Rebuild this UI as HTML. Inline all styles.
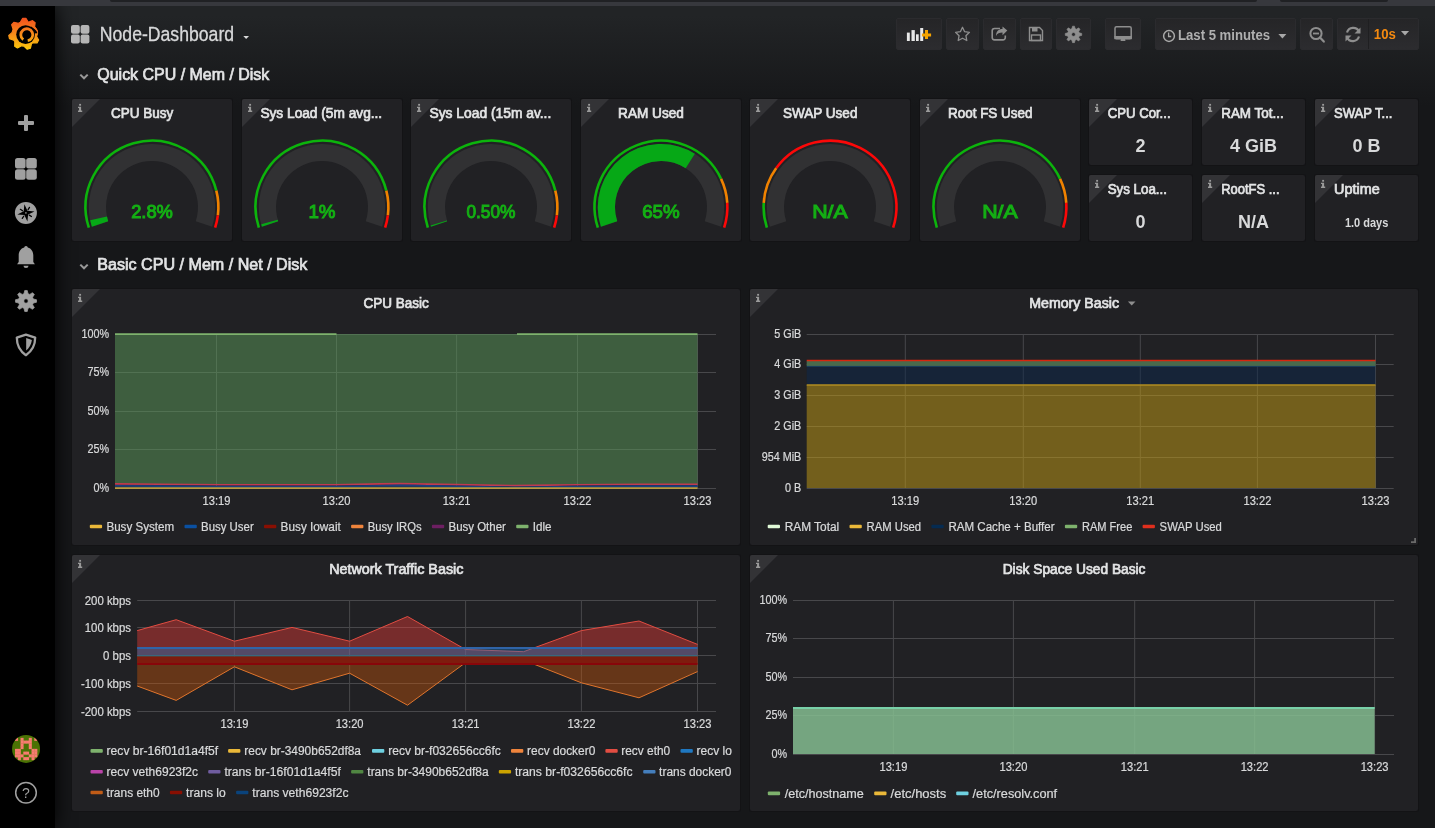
<!DOCTYPE html>
<html><head><meta charset="utf-8"><style>
html,body{margin:0;padding:0}
body{width:1435px;height:828px;overflow:hidden;position:relative;background:#161719;font-family:"Liberation Sans",sans-serif}
.bg{position:absolute;left:0;top:6px;width:1435px;height:822px;background:linear-gradient(180deg,#222426 10px,#161719 100px)}
.top{position:absolute;left:0;top:0;width:1435px;height:6px;background:#37383d}
.tab{position:absolute;top:0;height:2px;background:#202124;border-radius:0 0 5px 5px}
.side{position:absolute;left:0;top:6px;width:55px;height:822px;background:#000;box-shadow:0 0 20px #000}
.panel{position:absolute;background:#212124;border-radius:2px;box-sizing:border-box;overflow:hidden;box-shadow:0 0 0 1px #131315}
.corner{position:absolute;left:0;top:0;width:0;height:0;border-top:28px solid #333336;border-right:28px solid transparent}
.btn{position:absolute;box-sizing:border-box;background:linear-gradient(180deg,#252527,#2c2c2f);border:1px solid #2b2b2e;border-radius:2px}
svg{position:absolute;left:0;top:0;will-change:transform}
</style></head><body>
<div class="bg"></div>
<div class="side"></div>
<div class="top"></div><div class="tab" style="left:110px;width:1147px"></div><div class="tab" style="left:1280px;width:108px"></div>
<div class="panel" style="left:72px;top:99px;width:160px;height:142px"><div class="corner"></div></div><div class="panel" style="left:242px;top:99px;width:160px;height:142px"><div class="corner"></div></div><div class="panel" style="left:411px;top:99px;width:160px;height:142px"><div class="corner"></div></div><div class="panel" style="left:581px;top:99px;width:160px;height:142px"><div class="corner"></div></div><div class="panel" style="left:750px;top:99px;width:160px;height:142px"><div class="corner"></div></div><div class="panel" style="left:920px;top:99px;width:160px;height:142px"><div class="corner"></div></div><div class="panel" style="left:1089px;top:99px;width:103px;height:66px"><div class="corner"></div></div><div class="panel" style="left:1202px;top:99px;width:103px;height:66px"><div class="corner"></div></div><div class="panel" style="left:1315px;top:99px;width:103px;height:66px"><div class="corner"></div></div><div class="panel" style="left:1089px;top:175px;width:103px;height:66px"><div class="corner"></div></div><div class="panel" style="left:1202px;top:175px;width:103px;height:66px"><div class="corner"></div></div><div class="panel" style="left:1315px;top:175px;width:103px;height:66px"><div class="corner"></div></div><div class="panel" style="left:72px;top:289px;width:668px;height:256px"><div class="corner"></div></div><div class="panel" style="left:750px;top:289px;width:668px;height:256px"><div class="corner"></div></div><div class="panel" style="left:72px;top:555px;width:668px;height:256px"><div class="corner"></div></div><div class="panel" style="left:750px;top:555px;width:668px;height:256px"><div class="corner"></div></div><div class="btn" style="left:896px;top:18px;width:46px;height:32px"></div><div class="btn" style="left:946px;top:18px;width:33px;height:32px"></div><div class="btn" style="left:983px;top:18px;width:33px;height:32px"></div><div class="btn" style="left:1020px;top:18px;width:32px;height:32px"></div><div class="btn" style="left:1056px;top:18px;width:35px;height:32px"></div><div class="btn" style="left:1105px;top:18px;width:36px;height:32px"></div><div class="btn" style="left:1155px;top:18px;width:141px;height:32px"></div><div class="btn" style="left:1300px;top:18px;width:33px;height:32px"></div><div class="btn" style="left:1337px;top:18px;width:82px;height:32px"></div>
<svg width="1435" height="828" viewBox="0 0 1435 828" font-family="Liberation Sans, sans-serif">
<g fill="#9a9a9a"><rect x="79.15" y="103.9" width="1.9" height="1.8"/><path d="M78,106.7 h3.1 v3.9 h1.1 v1.4 h-4.2 v-1.4 h1.05 v-2.5 h-1.05 z"/></g>
<text x="111.1" y="117.8" font-size="14" fill="#e3e4e5" textLength="62.1" lengthAdjust="spacingAndGlyphs" stroke="#e3e4e5" stroke-width="0.7">CPU Busy</text>
<path d="M100.07,223.97 A54.60,54.60 0 1 1 203.93,223.97" stroke="#313133" stroke-width="17.2" fill="none"/>
<path d="M100.07,223.97 A54.60,54.60 0 0 1 98.58,218.41" stroke="#06a816" stroke-width="17.2" fill="none"/>
<path d="M88.85,227.62 A66.40,66.40 0 1 1 216.31,190.59" stroke="#0cb40c" stroke-width="2.6" fill="none"/>
<path d="M216.31,190.59 A66.40,66.40 0 0 1 217.88,215.42" stroke="#f08200" stroke-width="2.6" fill="none"/>
<path d="M217.88,215.42 A66.40,66.40 0 0 1 215.15,227.62" stroke="#fc0808" stroke-width="2.6" fill="none"/>
<text x="131.2" y="217.6" font-size="18.3" fill="#14b014" textLength="41.7" lengthAdjust="spacingAndGlyphs" stroke="#14b014" stroke-width="1.0">2.8%</text>
<g fill="#9a9a9a"><rect x="249.15" y="103.9" width="1.9" height="1.8"/><path d="M248,106.7 h3.1 v3.9 h1.1 v1.4 h-4.2 v-1.4 h1.05 v-2.5 h-1.05 z"/></g>
<text x="260.4" y="117.8" font-size="14" fill="#e3e4e5" textLength="121.8" lengthAdjust="spacingAndGlyphs" stroke="#e3e4e5" stroke-width="0.7">Sys Load (5m avg...</text>
<path d="M270.07,223.97 A54.60,54.60 0 1 1 373.93,223.97" stroke="#313133" stroke-width="17.2" fill="none"/>
<path d="M270.07,223.97 A54.60,54.60 0 0 1 269.47,222.00" stroke="#06a816" stroke-width="17.2" fill="none"/>
<path d="M258.85,227.62 A66.40,66.40 0 1 1 386.31,190.59" stroke="#0cb40c" stroke-width="2.6" fill="none"/>
<path d="M386.31,190.59 A66.40,66.40 0 0 1 387.88,215.42" stroke="#f08200" stroke-width="2.6" fill="none"/>
<path d="M387.88,215.42 A66.40,66.40 0 0 1 385.15,227.62" stroke="#fc0808" stroke-width="2.6" fill="none"/>
<text x="308.4" y="217.6" font-size="18.3" fill="#14b014" textLength="27.1" lengthAdjust="spacingAndGlyphs" stroke="#14b014" stroke-width="1.0">1%</text>
<g fill="#9a9a9a"><rect x="418.15" y="103.9" width="1.9" height="1.8"/><path d="M417,106.7 h3.1 v3.9 h1.1 v1.4 h-4.2 v-1.4 h1.05 v-2.5 h-1.05 z"/></g>
<text x="429.5" y="117.8" font-size="14" fill="#e3e4e5" textLength="121.8" lengthAdjust="spacingAndGlyphs" stroke="#e3e4e5" stroke-width="0.7">Sys Load (15m av...</text>
<path d="M439.07,223.97 A54.60,54.60 0 1 1 542.93,223.97" stroke="#313133" stroke-width="17.2" fill="none"/>
<path d="M439.07,223.97 A54.60,54.60 0 0 1 438.76,222.99" stroke="#06a816" stroke-width="17.2" fill="none"/>
<path d="M427.85,227.62 A66.40,66.40 0 1 1 555.31,190.59" stroke="#0cb40c" stroke-width="2.6" fill="none"/>
<path d="M555.31,190.59 A66.40,66.40 0 0 1 556.88,215.42" stroke="#f08200" stroke-width="2.6" fill="none"/>
<path d="M556.88,215.42 A66.40,66.40 0 0 1 554.15,227.62" stroke="#fc0808" stroke-width="2.6" fill="none"/>
<text x="466.4" y="217.6" font-size="18.3" fill="#14b014" textLength="49.1" lengthAdjust="spacingAndGlyphs" stroke="#14b014" stroke-width="1.0">0.50%</text>
<g fill="#9a9a9a"><rect x="588.15" y="103.9" width="1.9" height="1.8"/><path d="M587,106.7 h3.1 v3.9 h1.1 v1.4 h-4.2 v-1.4 h1.05 v-2.5 h-1.05 z"/></g>
<text x="618.1" y="117.8" font-size="14" fill="#e3e4e5" textLength="65.7" lengthAdjust="spacingAndGlyphs" stroke="#e3e4e5" stroke-width="0.7">RAM Used</text>
<path d="M609.07,223.97 A54.60,54.60 0 1 1 712.93,223.97" stroke="#313133" stroke-width="17.2" fill="none"/>
<path d="M609.07,223.97 A54.60,54.60 0 0 1 690.26,161.00" stroke="#06a816" stroke-width="17.2" fill="none"/>
<path d="M597.85,227.62 A66.40,66.40 0 0 1 721.08,178.83" stroke="#0cb40c" stroke-width="2.6" fill="none"/>
<path d="M721.08,178.83 A66.40,66.40 0 0 1 727.27,202.93" stroke="#f08200" stroke-width="2.6" fill="none"/>
<path d="M727.27,202.93 A66.40,66.40 0 0 1 724.15,227.62" stroke="#fc0808" stroke-width="2.6" fill="none"/>
<text x="642.2" y="217.6" font-size="18.3" fill="#14b014" textLength="37.5" lengthAdjust="spacingAndGlyphs" stroke="#14b014" stroke-width="1.0">65%</text>
<g fill="#9a9a9a"><rect x="757.15" y="103.9" width="1.9" height="1.8"/><path d="M756,106.7 h3.1 v3.9 h1.1 v1.4 h-4.2 v-1.4 h1.05 v-2.5 h-1.05 z"/></g>
<text x="783.1" y="117.8" font-size="14" fill="#e3e4e5" textLength="74.3" lengthAdjust="spacingAndGlyphs" stroke="#e3e4e5" stroke-width="0.7">SWAP Used</text>
<path d="M778.07,223.97 A54.60,54.60 0 1 1 881.93,223.97" stroke="#313133" stroke-width="17.2" fill="none"/>
<path d="M766.85,227.62 A66.40,66.40 0 0 1 763.73,202.93" stroke="#0cb40c" stroke-width="2.6" fill="none"/>
<path d="M763.73,202.93 A66.40,66.40 0 0 1 776.28,168.07" stroke="#f08200" stroke-width="2.6" fill="none"/>
<path d="M776.28,168.07 A66.40,66.40 0 0 1 893.15,227.62" stroke="#fc0808" stroke-width="2.6" fill="none"/>
<text x="812.2" y="217.6" font-size="18.3" fill="#14b014" textLength="35.5" lengthAdjust="spacingAndGlyphs" stroke="#14b014" stroke-width="1.0">N/A</text>
<g fill="#9a9a9a"><rect x="927.15" y="103.9" width="1.9" height="1.8"/><path d="M926,106.7 h3.1 v3.9 h1.1 v1.4 h-4.2 v-1.4 h1.05 v-2.5 h-1.05 z"/></g>
<text x="948.0" y="117.8" font-size="14" fill="#e3e4e5" textLength="84.5" lengthAdjust="spacingAndGlyphs" stroke="#e3e4e5" stroke-width="0.7">Root FS Used</text>
<path d="M948.07,223.97 A54.60,54.60 0 1 1 1051.93,223.97" stroke="#313133" stroke-width="17.2" fill="none"/>
<path d="M936.85,227.62 A66.40,66.40 0 0 1 1060.08,178.83" stroke="#0cb40c" stroke-width="2.6" fill="none"/>
<path d="M1060.08,178.83 A66.40,66.40 0 0 1 1066.27,202.93" stroke="#f08200" stroke-width="2.6" fill="none"/>
<path d="M1066.27,202.93 A66.40,66.40 0 0 1 1063.15,227.62" stroke="#fc0808" stroke-width="2.6" fill="none"/>
<text x="982.2" y="217.6" font-size="18.3" fill="#14b014" textLength="35.5" lengthAdjust="spacingAndGlyphs" stroke="#14b014" stroke-width="1.0">N/A</text>
<g fill="#9a9a9a"><rect x="1096.15" y="103.9" width="1.9" height="1.8"/><path d="M1095,106.7 h3.1 v3.9 h1.1 v1.4 h-4.2 v-1.4 h1.05 v-2.5 h-1.05 z"/></g>
<text x="1107.7" y="117.8" font-size="14" fill="#e3e4e5" textLength="62.9" lengthAdjust="spacingAndGlyphs" stroke="#e3e4e5" stroke-width="0.7">CPU Cor...</text>
<text x="1140.5" y="151.9" font-size="18" font-weight="bold" fill="#d8d9da" text-anchor="middle">2</text>
<g fill="#9a9a9a"><rect x="1209.15" y="103.9" width="1.9" height="1.8"/><path d="M1208,106.7 h3.1 v3.9 h1.1 v1.4 h-4.2 v-1.4 h1.05 v-2.5 h-1.05 z"/></g>
<text x="1221.2" y="117.8" font-size="14" fill="#e3e4e5" textLength="62.5" lengthAdjust="spacingAndGlyphs" stroke="#e3e4e5" stroke-width="0.7">RAM Tot...</text>
<text x="1253.5" y="151.9" font-size="18" font-weight="bold" fill="#d8d9da" text-anchor="middle">4 GiB</text>
<g fill="#9a9a9a"><rect x="1322.15" y="103.9" width="1.9" height="1.8"/><path d="M1321,106.7 h3.1 v3.9 h1.1 v1.4 h-4.2 v-1.4 h1.05 v-2.5 h-1.05 z"/></g>
<text x="1334.0" y="117.8" font-size="14" fill="#e3e4e5" textLength="58.5" lengthAdjust="spacingAndGlyphs" stroke="#e3e4e5" stroke-width="0.7">SWAP T...</text>
<text x="1366.5" y="151.9" font-size="18" font-weight="bold" fill="#d8d9da" text-anchor="middle">0 B</text>
<g fill="#9a9a9a"><rect x="1096.15" y="179.9" width="1.9" height="1.8"/><path d="M1095,182.7 h3.1 v3.9 h1.1 v1.4 h-4.2 v-1.4 h1.05 v-2.5 h-1.05 z"/></g>
<text x="1107.7" y="193.8" font-size="14" fill="#e3e4e5" textLength="59.2" lengthAdjust="spacingAndGlyphs" stroke="#e3e4e5" stroke-width="0.7">Sys Loa...</text>
<text x="1140.5" y="227.9" font-size="18" font-weight="bold" fill="#d8d9da" text-anchor="middle">0</text>
<g fill="#9a9a9a"><rect x="1209.15" y="179.9" width="1.9" height="1.8"/><path d="M1208,182.7 h3.1 v3.9 h1.1 v1.4 h-4.2 v-1.4 h1.05 v-2.5 h-1.05 z"/></g>
<text x="1221.2" y="193.8" font-size="14" fill="#e3e4e5" textLength="58.3" lengthAdjust="spacingAndGlyphs" stroke="#e3e4e5" stroke-width="0.7">RootFS ...</text>
<text x="1253.5" y="227.9" font-size="18" font-weight="bold" fill="#d8d9da" text-anchor="middle">N/A</text>
<g fill="#9a9a9a"><rect x="1322.15" y="179.9" width="1.9" height="1.8"/><path d="M1321,182.7 h3.1 v3.9 h1.1 v1.4 h-4.2 v-1.4 h1.05 v-2.5 h-1.05 z"/></g>
<text x="1334.0" y="193.8" font-size="14" fill="#e3e4e5" textLength="45.7" lengthAdjust="spacingAndGlyphs" stroke="#e3e4e5" stroke-width="0.7">Uptime</text>
<text x="1344.9" y="227.3" font-size="12" font-weight="bold" fill="#d8d9da" textLength="43.4" lengthAdjust="spacingAndGlyphs">1.0 days</text>
<text x="97.3" y="79.9" font-size="16" fill="#e3e4e5" textLength="172.0" lengthAdjust="spacingAndGlyphs" stroke="#e3e4e5" stroke-width="0.7">Quick CPU / Mem / Disk</text>
<path d="M80.3,74.6 L84,78.3 L87.7,74.6" stroke="#9a9a9a" stroke-width="2" fill="none"/>
<text x="97.3" y="269.9" font-size="16" fill="#e3e4e5" textLength="210.1" lengthAdjust="spacingAndGlyphs" stroke="#e3e4e5" stroke-width="0.7">Basic CPU / Mem / Net / Disk</text>
<path d="M80.3,264.6 L84,268.3 L87.7,264.6" stroke="#9a9a9a" stroke-width="2" fill="none"/>
<g fill="#9a9a9a"><rect x="79.15" y="293.9" width="1.9" height="1.8"/><path d="M78,296.7 h3.1 v3.9 h1.1 v1.4 h-4.2 v-1.4 h1.05 v-2.5 h-1.05 z"/></g>
<text x="363.5" y="307.8" font-size="14" fill="#e3e4e5" textLength="65.3" lengthAdjust="spacingAndGlyphs" stroke="#e3e4e5" stroke-width="0.7">CPU Basic</text>
<g fill="#9a9a9a"><rect x="757.15" y="293.9" width="1.9" height="1.8"/><path d="M756,296.7 h3.1 v3.9 h1.1 v1.4 h-4.2 v-1.4 h1.05 v-2.5 h-1.05 z"/></g>
<text x="1029.2" y="307.8" font-size="14" fill="#e3e4e5" textLength="89.8" lengthAdjust="spacingAndGlyphs" stroke="#e3e4e5" stroke-width="0.7">Memory Basic</text>
<g fill="#9a9a9a"><rect x="79.15" y="559.9" width="1.9" height="1.8"/><path d="M78,562.7 h3.1 v3.9 h1.1 v1.4 h-4.2 v-1.4 h1.05 v-2.5 h-1.05 z"/></g>
<text x="329.2" y="573.8" font-size="14" fill="#e3e4e5" textLength="134.2" lengthAdjust="spacingAndGlyphs" stroke="#e3e4e5" stroke-width="0.7">Network Traffic Basic</text>
<g fill="#9a9a9a"><rect x="757.15" y="559.9" width="1.9" height="1.8"/><path d="M756,562.7 h3.1 v3.9 h1.1 v1.4 h-4.2 v-1.4 h1.05 v-2.5 h-1.05 z"/></g>
<text x="1002.7" y="573.8" font-size="14" fill="#e3e4e5" textLength="142.8" lengthAdjust="spacingAndGlyphs" stroke="#e3e4e5" stroke-width="0.7">Disk Space Used Basic</text>
<path d="M1127.9,301.4 L1135.5,301.4 L1131.7,305.6 Z" fill="#8e8e8e"/>
<path d="M1415.1,538 L1415.1,542.1 L1411,542.1" stroke="#6a6a6a" stroke-width="1.8" fill="none"/>
<line x1="115" y1="334.5" x2="716" y2="334.5" stroke="#48484b" stroke-width="1"/>
<line x1="115" y1="372.5" x2="716" y2="372.5" stroke="#48484b" stroke-width="1"/>
<line x1="115" y1="411.5" x2="716" y2="411.5" stroke="#48484b" stroke-width="1"/>
<line x1="115" y1="449.5" x2="716" y2="449.5" stroke="#48484b" stroke-width="1"/>
<line x1="115" y1="488.5" x2="716" y2="488.5" stroke="#48484b" stroke-width="1"/>
<line x1="216.5" y1="334.5" x2="216.5" y2="488.5" stroke="#48484b" stroke-width="1"/>
<line x1="336.5" y1="334.5" x2="336.5" y2="488.5" stroke="#48484b" stroke-width="1"/>
<line x1="456.6" y1="334.5" x2="456.6" y2="488.5" stroke="#48484b" stroke-width="1"/>
<line x1="577.5" y1="334.5" x2="577.5" y2="488.5" stroke="#48484b" stroke-width="1"/>
<line x1="697.5" y1="334.5" x2="697.5" y2="488.5" stroke="#48484b" stroke-width="1"/>
<polygon points="115,334 697.5,334 697.5,484.3 640,484.3 577,484.7 515,485.6 456,484.6 400,483.6 380,483.9 336,484.8 220,484.8 160,484.3 115,483.9" fill="rgb(90,153,90)" fill-opacity="0.51"/>
<line x1="115" y1="334.2" x2="336.5" y2="334.2" stroke="#7EB26D" stroke-width="1.8"/>
<line x1="517" y1="334.2" x2="697.5" y2="334.2" stroke="#7EB26D" stroke-width="1.8"/>
<polygon points="115,485.7 160,486.1 220,486.6 336,486.6 380,485.7 400,485.40000000000003 456,486.40000000000003 515,487.40000000000003 577,486.5 640,486.1 697.5,486.1 697.5,488.5 115,488.5" fill="#2a3440"/>
<polyline points="115,483.9 160,484.3 220,484.8 336,484.8 380,483.9 400,483.6 456,484.6 515,485.6 577,484.7 640,484.3 697.5,484.3" stroke="#c03a50" stroke-width="1.6" fill="none"/>
<polyline points="115,485.7 160,486.1 220,486.6 336,486.6 380,485.7 400,485.40000000000003 456,486.40000000000003 515,487.40000000000003 577,486.5 640,486.1 697.5,486.1" stroke="#1a3f80" stroke-width="1.6" fill="none"/>
<polyline points="115,488.1 697.5,488.1" stroke="#b89a40" stroke-width="1.8" fill="none"/>
<text x="109.0" y="338.3" font-size="12" fill="#d8d9da" text-anchor="end" textLength="27.6" lengthAdjust="spacingAndGlyphs" stroke="#d8d9da" stroke-width="0.22">100%</text>
<text x="109.0" y="376.3" font-size="12" fill="#d8d9da" text-anchor="end" textLength="21.6" lengthAdjust="spacingAndGlyphs" stroke="#d8d9da" stroke-width="0.22">75%</text>
<text x="109.0" y="415.3" font-size="12" fill="#d8d9da" text-anchor="end" textLength="21.6" lengthAdjust="spacingAndGlyphs" stroke="#d8d9da" stroke-width="0.22">50%</text>
<text x="109.0" y="453.3" font-size="12" fill="#d8d9da" text-anchor="end" textLength="21.6" lengthAdjust="spacingAndGlyphs" stroke="#d8d9da" stroke-width="0.22">25%</text>
<text x="109.0" y="492.3" font-size="12" fill="#d8d9da" text-anchor="end" textLength="15.6" lengthAdjust="spacingAndGlyphs" stroke="#d8d9da" stroke-width="0.22">0%</text>
<text x="216.5" y="504.6" font-size="12" fill="#d8d9da" text-anchor="middle" textLength="27.9" lengthAdjust="spacingAndGlyphs" stroke="#d8d9da" stroke-width="0.22">13:19</text>
<text x="336.5" y="504.6" font-size="12" fill="#d8d9da" text-anchor="middle" textLength="27.9" lengthAdjust="spacingAndGlyphs" stroke="#d8d9da" stroke-width="0.22">13:20</text>
<text x="456.6" y="504.6" font-size="12" fill="#d8d9da" text-anchor="middle" textLength="27.9" lengthAdjust="spacingAndGlyphs" stroke="#d8d9da" stroke-width="0.22">13:21</text>
<text x="577.5" y="504.6" font-size="12" fill="#d8d9da" text-anchor="middle" textLength="27.9" lengthAdjust="spacingAndGlyphs" stroke="#d8d9da" stroke-width="0.22">13:22</text>
<text x="697.5" y="504.6" font-size="12" fill="#d8d9da" text-anchor="middle" textLength="27.9" lengthAdjust="spacingAndGlyphs" stroke="#d8d9da" stroke-width="0.22">13:23</text>
<rect x="89.8" y="524.7" width="12.3" height="3.6" rx="1" fill="#EAB839"/>
<text x="106.4" y="530.8" font-size="12" fill="#d8d9da" textLength="67.8" lengthAdjust="spacingAndGlyphs" stroke="#d8d9da" stroke-width="0.22">Busy System</text>
<rect x="184.5" y="524.7" width="12.3" height="3.6" rx="1" fill="#0A50A1"/>
<text x="201.1" y="530.8" font-size="12" fill="#d8d9da" textLength="52.6" lengthAdjust="spacingAndGlyphs" stroke="#d8d9da" stroke-width="0.22">Busy User</text>
<rect x="264.0" y="524.7" width="12.3" height="3.6" rx="1" fill="#890F02"/>
<text x="280.6" y="530.8" font-size="12" fill="#d8d9da" textLength="60.2" lengthAdjust="spacingAndGlyphs" stroke="#d8d9da" stroke-width="0.22">Busy Iowait</text>
<rect x="351.1" y="524.7" width="12.3" height="3.6" rx="1" fill="#EF843C"/>
<text x="367.7" y="530.8" font-size="12" fill="#d8d9da" textLength="53.9" lengthAdjust="spacingAndGlyphs" stroke="#d8d9da" stroke-width="0.22">Busy IRQs</text>
<rect x="431.9" y="524.7" width="12.3" height="3.6" rx="1" fill="#6D1F62"/>
<text x="448.5" y="530.8" font-size="12" fill="#d8d9da" textLength="57.4" lengthAdjust="spacingAndGlyphs" stroke="#d8d9da" stroke-width="0.22">Busy Other</text>
<rect x="516.2" y="524.7" width="12.3" height="3.6" rx="1" fill="#7EB26D"/>
<text x="532.8" y="530.8" font-size="12" fill="#d8d9da" textLength="18.8" lengthAdjust="spacingAndGlyphs" stroke="#d8d9da" stroke-width="0.22">Idle</text>
<line x1="806.7" y1="334.5" x2="1393.7" y2="334.5" stroke="#48484b" stroke-width="1"/>
<line x1="806.7" y1="364.5" x2="1393.7" y2="364.5" stroke="#48484b" stroke-width="1"/>
<line x1="806.7" y1="395.5" x2="1393.7" y2="395.5" stroke="#48484b" stroke-width="1"/>
<line x1="806.7" y1="426.5" x2="1393.7" y2="426.5" stroke="#48484b" stroke-width="1"/>
<line x1="806.7" y1="457.5" x2="1393.7" y2="457.5" stroke="#48484b" stroke-width="1"/>
<line x1="806.7" y1="488.5" x2="1393.7" y2="488.5" stroke="#48484b" stroke-width="1"/>
<line x1="905.3" y1="334.5" x2="905.3" y2="488.5" stroke="#48484b" stroke-width="1"/>
<line x1="1023.3" y1="334.5" x2="1023.3" y2="488.5" stroke="#48484b" stroke-width="1"/>
<line x1="1140.3" y1="334.5" x2="1140.3" y2="488.5" stroke="#48484b" stroke-width="1"/>
<line x1="1257.4" y1="334.5" x2="1257.4" y2="488.5" stroke="#48484b" stroke-width="1"/>
<line x1="1375.5" y1="334.5" x2="1375.5" y2="488.5" stroke="#48484b" stroke-width="1"/>
<rect x="806.7" y="385" width="568.8" height="103" fill="rgb(197,157,20)" fill-opacity="0.5"/>
<rect x="806.7" y="366" width="568.8" height="19" fill="rgb(11,39,76)" fill-opacity="0.5"/>
<rect x="806.7" y="361" width="568.8" height="5" fill="#4a6a4c"/>
<line x1="806.7" y1="366.4" x2="1375.5" y2="366.4" stroke="#1d4a6a" stroke-width="0.8" />
<line x1="806.7" y1="385" x2="1375.5" y2="385" stroke="#b08d22" stroke-width="1.6" />
<line x1="806.7" y1="360.5" x2="1375.5" y2="360.5" stroke="#d8260e" stroke-width="1.4" />
<text x="801.3" y="338.3" font-size="12" fill="#d8d9da" text-anchor="end" textLength="27.0" lengthAdjust="spacingAndGlyphs" stroke="#d8d9da" stroke-width="0.22">5 GiB</text>
<text x="801.3" y="368.3" font-size="12" fill="#d8d9da" text-anchor="end" textLength="27.0" lengthAdjust="spacingAndGlyphs" stroke="#d8d9da" stroke-width="0.22">4 GiB</text>
<text x="801.3" y="399.3" font-size="12" fill="#d8d9da" text-anchor="end" textLength="27.0" lengthAdjust="spacingAndGlyphs" stroke="#d8d9da" stroke-width="0.22">3 GiB</text>
<text x="801.3" y="430.3" font-size="12" fill="#d8d9da" text-anchor="end" textLength="27.0" lengthAdjust="spacingAndGlyphs" stroke="#d8d9da" stroke-width="0.22">2 GiB</text>
<text x="801.3" y="461.3" font-size="12" fill="#d8d9da" text-anchor="end" textLength="39.6" lengthAdjust="spacingAndGlyphs" stroke="#d8d9da" stroke-width="0.22">954 MiB</text>
<text x="801.3" y="492.3" font-size="12" fill="#d8d9da" text-anchor="end" textLength="16.2" lengthAdjust="spacingAndGlyphs" stroke="#d8d9da" stroke-width="0.22">0 B</text>
<text x="905.3" y="504.6" font-size="12" fill="#d8d9da" text-anchor="middle" textLength="27.9" lengthAdjust="spacingAndGlyphs" stroke="#d8d9da" stroke-width="0.22">13:19</text>
<text x="1023.3" y="504.6" font-size="12" fill="#d8d9da" text-anchor="middle" textLength="27.9" lengthAdjust="spacingAndGlyphs" stroke="#d8d9da" stroke-width="0.22">13:20</text>
<text x="1140.3" y="504.6" font-size="12" fill="#d8d9da" text-anchor="middle" textLength="27.9" lengthAdjust="spacingAndGlyphs" stroke="#d8d9da" stroke-width="0.22">13:21</text>
<text x="1257.4" y="504.6" font-size="12" fill="#d8d9da" text-anchor="middle" textLength="27.9" lengthAdjust="spacingAndGlyphs" stroke="#d8d9da" stroke-width="0.22">13:22</text>
<text x="1375.5" y="504.6" font-size="12" fill="#d8d9da" text-anchor="middle" textLength="27.9" lengthAdjust="spacingAndGlyphs" stroke="#d8d9da" stroke-width="0.22">13:23</text>
<rect x="767.7" y="524.7" width="12.3" height="3.6" rx="1" fill="#E0F9D7"/>
<text x="784.7" y="530.8" font-size="12" fill="#d8d9da" textLength="54.5" lengthAdjust="spacingAndGlyphs" stroke="#d8d9da" stroke-width="0.22">RAM Total</text>
<rect x="849.5" y="524.7" width="12.3" height="3.6" rx="1" fill="#EAB839"/>
<text x="866.5" y="530.8" font-size="12" fill="#d8d9da" textLength="54.6" lengthAdjust="spacingAndGlyphs" stroke="#d8d9da" stroke-width="0.22">RAM Used</text>
<rect x="931.4" y="524.7" width="12.3" height="3.6" rx="1" fill="#052B51"/>
<text x="948.4" y="530.8" font-size="12" fill="#d8d9da" textLength="106.2" lengthAdjust="spacingAndGlyphs" stroke="#d8d9da" stroke-width="0.22">RAM Cache + Buffer</text>
<rect x="1064.9" y="524.7" width="12.3" height="3.6" rx="1" fill="#7EB26D"/>
<text x="1081.9" y="530.8" font-size="12" fill="#d8d9da" textLength="50.4" lengthAdjust="spacingAndGlyphs" stroke="#d8d9da" stroke-width="0.22">RAM Free</text>
<rect x="1142.6" y="524.7" width="12.3" height="3.6" rx="1" fill="#E02F1D"/>
<text x="1159.6" y="530.8" font-size="12" fill="#d8d9da" textLength="62.3" lengthAdjust="spacingAndGlyphs" stroke="#d8d9da" stroke-width="0.22">SWAP Used</text>
<line x1="137.2" y1="600.5" x2="716" y2="600.5" stroke="#48484b" stroke-width="1"/>
<line x1="137.2" y1="627.5" x2="716" y2="627.5" stroke="#48484b" stroke-width="1"/>
<line x1="137.2" y1="655.5" x2="716" y2="655.5" stroke="#48484b" stroke-width="1"/>
<line x1="137.2" y1="683.5" x2="716" y2="683.5" stroke="#48484b" stroke-width="1"/>
<line x1="137.2" y1="711.5" x2="716" y2="711.5" stroke="#48484b" stroke-width="1"/>
<line x1="234.4" y1="600.5" x2="234.4" y2="711.5" stroke="#48484b" stroke-width="1"/>
<line x1="349.6" y1="600.5" x2="349.6" y2="711.5" stroke="#48484b" stroke-width="1"/>
<line x1="465.6" y1="600.5" x2="465.6" y2="711.5" stroke="#48484b" stroke-width="1"/>
<line x1="581.4" y1="600.5" x2="581.4" y2="711.5" stroke="#48484b" stroke-width="1"/>
<line x1="697.5" y1="600.5" x2="697.5" y2="711.5" stroke="#48484b" stroke-width="1"/>
<polygon points="137.2,655.5 137.2,630.6 176.2,619.7 234.4,641.2 292,627.4 349.6,641.2 407.5,616.5 465.6,649.5 523.6,651.7 581.4,630.6 639,621 697.5,644.4 697.5,655.5" fill="rgb(250,63,58)" fill-opacity="0.4"/>
<polyline points="137.2,630.6 176.2,619.7 234.4,641.2 292,627.4 349.6,641.2 407.5,616.5 465.6,649.5 523.6,651.7 581.4,630.6 639,621 697.5,644.4" stroke="#E24D42" stroke-width="1" fill="none"/>
<polygon points="137.2,655.5 137.2,686 176.2,700.4 234.4,666.8 292,689.8 349.6,673.2 407.5,705.2 465.6,662.6 523.6,660.1 581.4,682.8 639,697.8 697.5,671.6 697.5,655.5" fill="rgb(208,88,8)" fill-opacity="0.4"/>
<polyline points="137.2,686 176.2,700.4 234.4,666.8 292,689.8 349.6,673.2 407.5,705.2 465.6,662.6 523.6,660.1 581.4,682.8 639,697.8 697.5,671.6" stroke="#E0752D" stroke-width="1" fill="none"/>
<rect x="137.2" y="647.1" width="560.3" height="8.7" fill="#1F78C1" fill-opacity="0.4"/>
<line x1="137.2" y1="648" x2="697.5" y2="648" stroke="#2f64a8" stroke-width="2"/>
<line x1="137.2" y1="655.8" x2="697.5" y2="655.8" stroke="#38687e" stroke-width="1.6"/>
<rect x="137.2" y="656.6" width="560.3" height="7.4" fill="#7e1c0e"/>
<line x1="137.2" y1="664" x2="697.5" y2="664" stroke="#88060a" stroke-width="2"/>
<text x="131.0" y="604.9" font-size="12" fill="#d8d9da" text-anchor="end" textLength="46.3" lengthAdjust="spacingAndGlyphs" stroke="#d8d9da" stroke-width="0.22">200 kbps</text>
<text x="131.0" y="631.9" font-size="12" fill="#d8d9da" text-anchor="end" textLength="46.3" lengthAdjust="spacingAndGlyphs" stroke="#d8d9da" stroke-width="0.22">100 kbps</text>
<text x="131.0" y="659.9" font-size="12" fill="#d8d9da" text-anchor="end" textLength="27.9" lengthAdjust="spacingAndGlyphs" stroke="#d8d9da" stroke-width="0.22">0 bps</text>
<text x="131.0" y="687.9" font-size="12" fill="#d8d9da" text-anchor="end" textLength="50.1" lengthAdjust="spacingAndGlyphs" stroke="#d8d9da" stroke-width="0.22">-100 kbps</text>
<text x="131.0" y="715.9" font-size="12" fill="#d8d9da" text-anchor="end" textLength="50.1" lengthAdjust="spacingAndGlyphs" stroke="#d8d9da" stroke-width="0.22">-200 kbps</text>
<text x="234.4" y="728.2" font-size="12" fill="#d8d9da" text-anchor="middle" textLength="27.9" lengthAdjust="spacingAndGlyphs" stroke="#d8d9da" stroke-width="0.22">13:19</text>
<text x="349.6" y="728.2" font-size="12" fill="#d8d9da" text-anchor="middle" textLength="27.9" lengthAdjust="spacingAndGlyphs" stroke="#d8d9da" stroke-width="0.22">13:20</text>
<text x="465.6" y="728.2" font-size="12" fill="#d8d9da" text-anchor="middle" textLength="27.9" lengthAdjust="spacingAndGlyphs" stroke="#d8d9da" stroke-width="0.22">13:21</text>
<text x="581.4" y="728.2" font-size="12" fill="#d8d9da" text-anchor="middle" textLength="27.9" lengthAdjust="spacingAndGlyphs" stroke="#d8d9da" stroke-width="0.22">13:22</text>
<text x="697.5" y="728.2" font-size="12" fill="#d8d9da" text-anchor="middle" textLength="27.9" lengthAdjust="spacingAndGlyphs" stroke="#d8d9da" stroke-width="0.22">13:23</text>
<rect x="90.5" y="749.1" width="12.3" height="3.6" rx="1" fill="#7EB26D"/>
<text x="106.6" y="755.2" font-size="12" fill="#d8d9da" textLength="111.6" lengthAdjust="spacingAndGlyphs" stroke="#d8d9da" stroke-width="0.22">recv br-16f01d1a4f5f</text>
<rect x="228.1" y="749.1" width="12.3" height="3.6" rx="1" fill="#EAB839"/>
<text x="244.3" y="755.2" font-size="12" fill="#d8d9da" textLength="116.7" lengthAdjust="spacingAndGlyphs" stroke="#d8d9da" stroke-width="0.22">recv br-3490b652df8a</text>
<rect x="372.0" y="749.1" width="12.3" height="3.6" rx="1" fill="#6ED0E0"/>
<text x="388.2" y="755.2" font-size="12" fill="#d8d9da" textLength="112.6" lengthAdjust="spacingAndGlyphs" stroke="#d8d9da" stroke-width="0.22">recv br-f032656cc6fc</text>
<rect x="511.0" y="749.1" width="12.3" height="3.6" rx="1" fill="#EF843C"/>
<text x="527.1" y="755.2" font-size="12" fill="#d8d9da" textLength="68.2" lengthAdjust="spacingAndGlyphs" stroke="#d8d9da" stroke-width="0.22">recv docker0</text>
<rect x="605.4" y="749.1" width="12.3" height="3.6" rx="1" fill="#E24D42"/>
<text x="621.3" y="755.2" font-size="12" fill="#d8d9da" textLength="48.9" lengthAdjust="spacingAndGlyphs" stroke="#d8d9da" stroke-width="0.22">recv eth0</text>
<rect x="680.5" y="749.1" width="12.3" height="3.6" rx="1" fill="#1F78C1"/>
<text x="696.6" y="755.2" font-size="12" fill="#d8d9da" textLength="35.3" lengthAdjust="spacingAndGlyphs" stroke="#d8d9da" stroke-width="0.22">recv lo</text>
<rect x="90.5" y="769.9" width="12.3" height="3.6" rx="1" fill="#BA43A9"/>
<text x="106.6" y="776.0" font-size="12" fill="#d8d9da" textLength="91.4" lengthAdjust="spacingAndGlyphs" stroke="#d8d9da" stroke-width="0.22">recv veth6923f2c</text>
<rect x="208.2" y="769.9" width="12.3" height="3.6" rx="1" fill="#705DA0"/>
<text x="224.4" y="776.0" font-size="12" fill="#d8d9da" textLength="116.4" lengthAdjust="spacingAndGlyphs" stroke="#d8d9da" stroke-width="0.22">trans br-16f01d1a4f5f</text>
<rect x="351.1" y="769.9" width="12.3" height="3.6" rx="1" fill="#508642"/>
<text x="367.3" y="776.0" font-size="12" fill="#d8d9da" textLength="121.3" lengthAdjust="spacingAndGlyphs" stroke="#d8d9da" stroke-width="0.22">trans br-3490b652df8a</text>
<rect x="498.8" y="769.9" width="12.3" height="3.6" rx="1" fill="#CCA300"/>
<text x="514.9" y="776.0" font-size="12" fill="#d8d9da" textLength="117.7" lengthAdjust="spacingAndGlyphs" stroke="#d8d9da" stroke-width="0.22">trans br-f032656cc6fc</text>
<rect x="643.2" y="769.9" width="12.3" height="3.6" rx="1" fill="#447EBC"/>
<text x="659.1" y="776.0" font-size="12" fill="#d8d9da" textLength="72.3" lengthAdjust="spacingAndGlyphs" stroke="#d8d9da" stroke-width="0.22">trans docker0</text>
<rect x="90.5" y="790.7" width="12.3" height="3.6" rx="1" fill="#C15C17"/>
<text x="106.6" y="796.8" font-size="12" fill="#d8d9da" textLength="53.0" lengthAdjust="spacingAndGlyphs" stroke="#d8d9da" stroke-width="0.22">trans eth0</text>
<rect x="169.9" y="790.7" width="12.3" height="3.6" rx="1" fill="#890F02"/>
<text x="186.1" y="796.8" font-size="12" fill="#d8d9da" textLength="39.7" lengthAdjust="spacingAndGlyphs" stroke="#d8d9da" stroke-width="0.22">trans lo</text>
<rect x="236.1" y="790.7" width="12.3" height="3.6" rx="1" fill="#0A437C"/>
<text x="252.3" y="796.8" font-size="12" fill="#d8d9da" textLength="96.2" lengthAdjust="spacingAndGlyphs" stroke="#d8d9da" stroke-width="0.22">trans veth6923f2c</text>
<line x1="793" y1="600.5" x2="1394" y2="600.5" stroke="#48484b" stroke-width="1"/>
<line x1="793" y1="638.5" x2="1394" y2="638.5" stroke="#48484b" stroke-width="1"/>
<line x1="793" y1="677.5" x2="1394" y2="677.5" stroke="#48484b" stroke-width="1"/>
<line x1="793" y1="715.5" x2="1394" y2="715.5" stroke="#48484b" stroke-width="1"/>
<line x1="793" y1="754.5" x2="1394" y2="754.5" stroke="#48484b" stroke-width="1"/>
<line x1="893.4" y1="600.5" x2="893.4" y2="754.5" stroke="#48484b" stroke-width="1"/>
<line x1="1013.4" y1="600.5" x2="1013.4" y2="754.5" stroke="#48484b" stroke-width="1"/>
<line x1="1134.7" y1="600.5" x2="1134.7" y2="754.5" stroke="#48484b" stroke-width="1"/>
<line x1="1254.6" y1="600.5" x2="1254.6" y2="754.5" stroke="#48484b" stroke-width="1"/>
<line x1="1374.6" y1="600.5" x2="1374.6" y2="754.5" stroke="#48484b" stroke-width="1"/>
<rect x="793" y="707" width="581.6" height="47" fill="rgb(135,192,147)" fill-opacity="0.83"/>
<line x1="793" y1="708" x2="1374.6" y2="708" stroke="#78d0a8" stroke-width="2"/>
<text x="787.0" y="604.3" font-size="12" fill="#d8d9da" text-anchor="end" textLength="27.6" lengthAdjust="spacingAndGlyphs" stroke="#d8d9da" stroke-width="0.22">100%</text>
<text x="787.0" y="642.3" font-size="12" fill="#d8d9da" text-anchor="end" textLength="21.6" lengthAdjust="spacingAndGlyphs" stroke="#d8d9da" stroke-width="0.22">75%</text>
<text x="787.0" y="681.3" font-size="12" fill="#d8d9da" text-anchor="end" textLength="21.6" lengthAdjust="spacingAndGlyphs" stroke="#d8d9da" stroke-width="0.22">50%</text>
<text x="787.0" y="719.3" font-size="12" fill="#d8d9da" text-anchor="end" textLength="21.6" lengthAdjust="spacingAndGlyphs" stroke="#d8d9da" stroke-width="0.22">25%</text>
<text x="787.0" y="758.3" font-size="12" fill="#d8d9da" text-anchor="end" textLength="15.6" lengthAdjust="spacingAndGlyphs" stroke="#d8d9da" stroke-width="0.22">0%</text>
<text x="893.4" y="771.2" font-size="12" fill="#d8d9da" text-anchor="middle" textLength="27.9" lengthAdjust="spacingAndGlyphs" stroke="#d8d9da" stroke-width="0.22">13:19</text>
<text x="1013.4" y="771.2" font-size="12" fill="#d8d9da" text-anchor="middle" textLength="27.9" lengthAdjust="spacingAndGlyphs" stroke="#d8d9da" stroke-width="0.22">13:20</text>
<text x="1134.7" y="771.2" font-size="12" fill="#d8d9da" text-anchor="middle" textLength="27.9" lengthAdjust="spacingAndGlyphs" stroke="#d8d9da" stroke-width="0.22">13:21</text>
<text x="1254.6" y="771.2" font-size="12" fill="#d8d9da" text-anchor="middle" textLength="27.9" lengthAdjust="spacingAndGlyphs" stroke="#d8d9da" stroke-width="0.22">13:22</text>
<text x="1374.6" y="771.2" font-size="12" fill="#d8d9da" text-anchor="middle" textLength="27.9" lengthAdjust="spacingAndGlyphs" stroke="#d8d9da" stroke-width="0.22">13:23</text>
<rect x="767.8" y="791.6" width="12.3" height="3.6" rx="1" fill="#7EB26D"/>
<text x="784.7" y="797.7" font-size="12" fill="#d8d9da" textLength="79.1" lengthAdjust="spacingAndGlyphs" stroke="#d8d9da" stroke-width="0.22">/etc/hostname</text>
<rect x="874.2" y="791.6" width="12.3" height="3.6" rx="1" fill="#EAB839"/>
<text x="890.6" y="797.7" font-size="12" fill="#d8d9da" textLength="55.6" lengthAdjust="spacingAndGlyphs" stroke="#d8d9da" stroke-width="0.22">/etc/hosts</text>
<rect x="956.2" y="791.6" width="12.3" height="3.6" rx="1" fill="#6ED0E0"/>
<text x="972.6" y="797.7" font-size="12" fill="#d8d9da" textLength="84.5" lengthAdjust="spacingAndGlyphs" stroke="#d8d9da" stroke-width="0.22">/etc/resolv.conf</text>
<text x="99.8" y="40.7" font-size="19.3" fill="#d8d9da" textLength="134.3" lengthAdjust="spacingAndGlyphs" stroke="#d8d9da" stroke-width="0.3">Node-Dashboard</text>
<path d="M243.3,36 L249,36 L246.15,39 Z" fill="#d8d9da"/>
<rect x="71" y="25" width="8.8" height="8.8" rx="2" fill="#b5b5b5"/>
<rect x="80.6" y="25" width="8.8" height="8.8" rx="2" fill="#b5b5b5"/>
<rect x="71" y="34.6" width="8.8" height="8.8" rx="2" fill="#b5b5b5"/>
<rect x="80.6" y="34.6" width="8.8" height="8.8" rx="2" fill="#b5b5b5"/>
<line x1="1368.5" y1="19" x2="1368.5" y2="49" stroke="#1f1f21" stroke-width="1"/>
<g fill="#e8e8e8"><rect x="906.9" y="32.6" width="2.9" height="8.4"/><rect x="911.5" y="30.1" width="3.3" height="10.9"/><rect x="916" y="34.3" width="2.7" height="6.7"/><rect x="920.2" y="28" width="3" height="13"/></g>
<path d="M925,30.1 h3 v3.3 h3.1 v3 h-3.1 v2.5 h-3 v-2.5 h-3.1 v-3 h3.1 z" fill="#f5a300"/>
<polygon points="962.50,27.30 964.62,31.69 969.44,32.34 965.92,35.71 966.79,40.51 962.50,38.20 958.21,40.51 959.08,35.71 955.56,32.34 960.38,31.69" fill="none" stroke="#8e8e8e" stroke-width="1.3" stroke-linejoin="round"/>
<path d="M1000,28.5 h-5.5 a2.3,2.3 0 0 0 -2.3,2.3 v6.8 a2.3,2.3 0 0 0 2.3,2.3 h8.5 a2.3,2.3 0 0 0 2.3,-2.3 v-2" fill="none" stroke="#8e8e8e" stroke-width="1.6"/>
<path d="M1007.3,30.5 L1002.5,26.4 v2.5 c-4,0 -6.5,2.5 -6.5,7 c1.2,-2.5 3.5,-3.3 6.5,-3.3 v2.6 z" fill="#8e8e8e"/>
<path d="M1029.5,27.5 h10 l3,3 v10 h-13 z" fill="none" stroke="#8e8e8e" stroke-width="1.4"/><rect x="1032" y="27.5" width="5.5" height="4" fill="#8e8e8e"/><rect x="1031.5" y="35" width="9" height="5.5" fill="none" stroke="#8e8e8e" stroke-width="1.4"/>
<path d="M1071.90,28.62 L1072.51,26.16 L1074.49,26.16 L1075.10,28.62 L1076.46,29.18 L1078.62,27.87 L1080.03,29.28 L1078.72,31.44 L1079.28,32.80 L1081.74,33.41 L1081.74,35.39 L1079.28,36.00 L1078.72,37.36 L1080.03,39.52 L1078.62,40.93 L1076.46,39.62 L1075.10,40.18 L1074.49,42.64 L1072.51,42.64 L1071.90,40.18 L1070.54,39.62 L1068.38,40.93 L1066.97,39.52 L1068.28,37.36 L1067.72,36.00 L1065.26,35.39 L1065.26,33.41 L1067.72,32.80 L1068.28,31.44 L1066.97,29.28 L1068.38,27.87 L1070.54,29.18 Z M1075.4,34.4 A1.9,1.9 0 1 0 1071.6,34.4 A1.9,1.9 0 1 0 1075.4,34.4 Z" fill="#8e8e8e" stroke="#8e8e8e" stroke-width="0.6" stroke-linejoin="round" fill-rule="evenodd"/>
<rect x="1115" y="26.8" width="16.2" height="12" rx="1.5" fill="none" stroke="#8e8e8e" stroke-width="1.5"/><rect x="1114.3" y="36" width="17.6" height="3.2" fill="#8e8e8e"/><path d="M1121,39 h4 l0.5,2 h-5 z" fill="#8e8e8e"/>
<circle cx="1169" cy="36" r="5.4" fill="none" stroke="#a8a8a8" stroke-width="1.5"/><path d="M1168.6,32.5 v4 h2.6" fill="none" stroke="#a8a8a8" stroke-width="1.3"/>
<text x="1178.0" y="40.1" font-size="14" font-weight="bold" fill="#b0b0b0" textLength="92.0" lengthAdjust="spacingAndGlyphs">Last 5 minutes</text>
<path d="M1278.4,34.1 L1286.4,34.1 L1282.4,38.5 Z" fill="#a8a8a8"/>
<circle cx="1316" cy="33.5" r="5.6" fill="none" stroke="#8e8e8e" stroke-width="2"/><path d="M1320,37.5 L1323.8,41.6" stroke="#8e8e8e" stroke-width="2.2" stroke-linecap="round"/><rect x="1313" y="32.6" width="6" height="1.8" fill="#8e8e8e"/>
<path d="M1347,32.5 A6.5,6.5 0 0 1 1359,31.5" fill="none" stroke="#8e8e8e" stroke-width="2.2"/><path d="M1360.5,27.5 v6 h-6 z" fill="#8e8e8e"/><path d="M1359,36.5 A6.5,6.5 0 0 1 1347,37.5" fill="none" stroke="#8e8e8e" stroke-width="2.2"/><path d="M1345.5,41.5 v-6 h6 z" fill="#8e8e8e"/>
<text x="1373.8" y="39.2" font-size="14" font-weight="bold" fill="#f58a10" textLength="22.0" lengthAdjust="spacingAndGlyphs">10s</text>
<path d="M1401,31.1 L1409.1,31.1 L1405,35.4 Z" fill="#a8a8a8"/>
<rect x="24" y="115" width="4" height="16" rx="1" fill="#a0a0a0"/><rect x="18" y="121" width="16" height="4" rx="1" fill="#a0a0a0"/>
<rect x="15" y="158" width="10.6" height="10.6" rx="2.5" fill="#a0a0a0"/>
<rect x="26.2" y="158" width="10.6" height="10.6" rx="2.5" fill="#a0a0a0"/>
<rect x="15" y="169.2" width="10.6" height="10.6" rx="2.5" fill="#a0a0a0"/>
<rect x="26.2" y="169.2" width="10.6" height="10.6" rx="2.5" fill="#a0a0a0"/>
<circle cx="25.9" cy="212.9" r="11" fill="#a0a0a0"/>
<polygon points="24.39,204.33 27.45,210.69 34.47,211.39 28.11,214.45 27.41,221.47 24.35,215.11 17.33,214.41 23.69,211.35" fill="#000"/>
<line x1="28.08" y1="209.55" x2="29.49" y2="207.36" stroke="#000" stroke-width="1.3" stroke-linecap="round"/>
<line x1="29.25" y1="215.08" x2="31.44" y2="216.49" stroke="#000" stroke-width="1.3" stroke-linecap="round"/>
<line x1="23.72" y1="216.25" x2="22.31" y2="218.44" stroke="#000" stroke-width="1.3" stroke-linecap="round"/>
<line x1="22.55" y1="210.72" x2="20.36" y2="209.31" stroke="#000" stroke-width="1.3" stroke-linecap="round"/>
<rect x="25.2" y="212.2" width="1.4" height="1.4" fill="#a0a0a0"/>
<path d="M26,246 c1.2,0 1.6,0.8 1.8,1.4 c3.5,1 5.5,4 5.5,8 v6.5 l1.6,2.4 h-17.8 l1.6,-2.4 v-6.5 c0,-4 2,-7 5.5,-8 c0.2,-0.6 0.6,-1.4 1.8,-1.4 z" fill="#a0a0a0"/><path d="M23.5,265.8 h5 a2.5,2.2 0 0 1 -5,0 z" fill="#a0a0a0"/>
<path d="M23.97,293.68 L24.73,290.48 L27.27,290.48 L28.03,293.68 L29.75,294.39 L32.54,292.66 L34.34,294.46 L32.61,297.25 L33.32,298.97 L36.52,299.73 L36.52,302.27 L33.32,303.03 L32.61,304.75 L34.34,307.54 L32.54,309.34 L29.75,307.61 L28.03,308.32 L27.27,311.52 L24.73,311.52 L23.97,308.32 L22.25,307.61 L19.46,309.34 L17.66,307.54 L19.39,304.75 L18.68,303.03 L15.48,302.27 L15.48,299.73 L18.68,298.97 L19.39,297.25 L17.66,294.46 L19.46,292.66 L22.25,294.39 Z M28.2,301 A2.2,2.2 0 1 0 23.8,301 A2.2,2.2 0 1 0 28.2,301 Z" fill="#a0a0a0" stroke="#a0a0a0" stroke-width="0.7" stroke-linejoin="round" fill-rule="evenodd"/>
<path d="M16.8,337.6 L25.9,334.6 L35.2,337.6 C35.2,345.5 31.5,351.5 25.9,355.2 C20.3,351.5 16.8,345.5 16.8,337.6 Z" fill="none" stroke="#a0a0a0" stroke-width="2.3" stroke-linejoin="round"/>
<path d="M26.2,338.1 L31.9,340.1 C31.2,344.5 29.2,348 26.2,350.6 Z" fill="#a0a0a0"/>
<clipPath id="av"><circle cx="26.05" cy="748.9" r="14"/></clipPath>
<g clip-path="url(#av)"><rect x="12" y="734.8" width="28" height="28.5" fill="#4a7204"/><g fill="#f87c70"><rect x="15.02" y="737.83" width="3.05" height="3.05"/><rect x="20.53" y="737.83" width="3.05" height="3.05"/><rect x="28.79" y="737.83" width="3.05" height="3.05"/><rect x="34.30" y="737.83" width="3.05" height="3.05"/><rect x="20.53" y="740.58" width="3.05" height="3.05"/><rect x="23.28" y="740.58" width="3.05" height="3.05"/><rect x="26.04" y="740.58" width="3.05" height="3.05"/><rect x="28.79" y="740.58" width="3.05" height="3.05"/><rect x="20.53" y="743.34" width="3.05" height="3.05"/><rect x="28.79" y="743.34" width="3.05" height="3.05"/><rect x="20.53" y="746.09" width="3.05" height="3.05"/><rect x="28.79" y="746.09" width="3.05" height="3.05"/><rect x="15.02" y="748.85" width="3.05" height="3.05"/><rect x="17.77" y="748.85" width="3.05" height="3.05"/><rect x="31.54" y="748.85" width="3.05" height="3.05"/><rect x="34.30" y="748.85" width="3.05" height="3.05"/><rect x="15.02" y="751.60" width="3.05" height="3.05"/><rect x="17.77" y="751.60" width="3.05" height="3.05"/><rect x="23.28" y="751.60" width="3.05" height="3.05"/><rect x="26.04" y="751.60" width="3.05" height="3.05"/><rect x="31.54" y="751.60" width="3.05" height="3.05"/><rect x="34.30" y="751.60" width="3.05" height="3.05"/><rect x="15.02" y="754.35" width="3.05" height="3.05"/><rect x="17.77" y="754.35" width="3.05" height="3.05"/><rect x="20.53" y="754.35" width="3.05" height="3.05"/><rect x="28.79" y="754.35" width="3.05" height="3.05"/><rect x="31.54" y="754.35" width="3.05" height="3.05"/><rect x="34.30" y="754.35" width="3.05" height="3.05"/><rect x="17.77" y="757.11" width="3.05" height="3.05"/><rect x="23.28" y="757.11" width="3.05" height="3.05"/><rect x="26.04" y="757.11" width="3.05" height="3.05"/><rect x="31.54" y="757.11" width="3.05" height="3.05"/></g></g>
<circle cx="26" cy="792.7" r="10.3" fill="none" stroke="#a0a0a0" stroke-width="1.5"/>
<text x="26.0" y="797.8" font-size="14" fill="#a0a0a0" text-anchor="middle">?</text>
<linearGradient id="lg" gradientUnits="userSpaceOnUse" x1="0" y1="18" x2="0" y2="49"><stop offset="0" stop-color="#f1501e"/><stop offset="0.45" stop-color="#f5831b"/><stop offset="1" stop-color="#fcc70d"/></linearGradient>
<polygon points="20.33,22.36 22.67,18.39 25.93,18.39 28.27,22.36 28.27,22.36 32.57,20.67 35.14,22.68 34.53,27.26 35.53,28.18 37.11,30.71 37.49,33.44 36.67,36.30 36.31,36.02 38.66,40.00 37.08,42.85 32.46,42.97 31.47,43.77 30.40,48.26 27.28,49.21 23.87,46.09 21.56,45.79 17.46,47.92 14.70,46.19 14.82,41.58 13.84,40.18 9.46,38.72 8.79,35.53 12.19,32.41 13.07,29.13 11.68,24.73 13.86,22.31 18.39,23.23" fill="url(#lg)" stroke="url(#lg)" stroke-width="1.2" stroke-linejoin="round"/>
<circle cx="25.6" cy="34.6" r="9.4" fill="#000"/>
<path d="M30.5,26.2 Q35.8,28.5 37.6,33.2 L33.2,33.5 Z" fill="#000"/>
<path d="M33.2,25.2 Q38.2,28.6 38.2,33.2 Q36.3,29.5 32.3,27.2 Z" fill="#f26c1c"/>
<path d="M23.27,39.65 A6.00,6.00 0 1 1 27.72,40.73" stroke="url(#lg)" stroke-width="2.8" fill="none"/>
<circle cx="26.4" cy="35.2" r="2.0" fill="#000"/>
</svg>
</body></html>
